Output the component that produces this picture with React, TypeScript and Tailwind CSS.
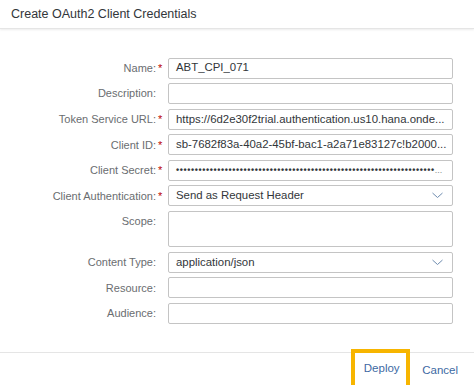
import React from "react";

type Field = {
  label: string;
  required?: boolean;
  value?: string;
  kind?: "input" | "select" | "area" | "secret";
};

const fields: Field[] = [
  { label: "Name:", required: true, value: "ABT_CPI_071" },
  { label: "Description:" },
  {
    label: "Token Service URL:",
    required: true,
    value: "https://6d2e30f2trial.authentication.us10.hana.onde...",
  },
  {
    label: "Client ID:",
    required: true,
    value: "sb-7682f83a-40a2-45bf-bac1-a2a71e83127c!b2000...",
  },
  { label: "Client Secret:", required: true, kind: "secret" },
  { label: "Client Authentication:", required: true, value: "Send as Request Header", kind: "select" },
  { label: "Scope:", kind: "area" },
  { label: "Content Type:", value: "application/json", kind: "select" },
  { label: "Resource:" },
  { label: "Audience:" },
];

const Chevron = () => (
  <svg width="11" height="7" viewBox="0 0 11 7" className="shrink-0">
    <path d="M0.5 1 L5.5 5.5 L10.5 1" fill="none" stroke="#6f8cb0" strokeWidth="1" />
  </svg>
);

const FieldBox = ({ f }: { f: Field }) => {
  const base =
    "w-[285px] border border-[#c4c4c4] rounded-[2px] bg-white text-[11.4px] text-[#32363a] flex items-center px-[7px] overflow-hidden whitespace-nowrap";
  if (f.kind === "area") return <div className={`${base} h-[36px]`} />;
  if (f.kind === "select")
    return (
      <div className={`${base} h-[21px] justify-between pr-[9px]`}>
        <span>{f.value}</span>
        <Chevron />
      </div>
    );
  if (f.kind === "secret")
    return (
      <div className={`${base} h-[21px] items-end pb-[5px]`}>
        <span className="text-[9px] leading-none tracking-[0.6px] font-bold text-[#32363a]">
          {"•".repeat(69)}
        </span>
        <span className="text-[9px] leading-none text-[#8a8d90]">...</span>
      </div>
    );
  return (
    <div className={`${base} h-[21px]`}>
      <span>{f.value}</span>
    </div>
  );
};

export default function App() {
  return (
    <div
      className="w-[474px] h-[385px] bg-white overflow-hidden flex flex-col"
      style={{ fontFamily: '"Liberation Sans", Arial, sans-serif' }}
    >
      {/* header */}
      <div className="h-[29px] flex items-center px-[11px] border-b border-[#e5e5e5] shadow-[0_1px_2px_rgba(0,0,0,0.08)]">
        <span className="text-[12.5px] text-[#32363a]">Create OAuth2 Client Credentials</span>
      </div>

      {/* form */}
      <div className="flex-1 pt-[28.5px] flex flex-col gap-[4.6px]">
        {fields.map((f) => (
          <div key={f.label} className="flex items-start">
            <div className="w-[156px] h-[21px] flex items-center justify-end text-[11px] text-[#6a6d70]">
              {f.label}
            </div>
            <div className="w-[12px] h-[21px] flex items-center pl-[2px] text-[11px] text-[#bb0000]">
              {f.required ? "*" : ""}
            </div>
            <FieldBox f={f} />
          </div>
        ))}
      </div>

      {/* footer */}
      <div className="h-[33px] border-t border-[#e5e5e5] flex items-start justify-end pr-[16px]">
        <div className="mt-[-4px] h-[40px] w-[59px] border-[4px] border-[#f7b500] flex items-center justify-center pl-[2px] text-[11.5px] text-[#3d69a3]">
          Deploy
        </div>
        <div className="ml-[12px] h-[36px] flex items-center text-[11.5px] text-[#3d69a3]">Cancel</div>
      </div>
    </div>
  );
}
